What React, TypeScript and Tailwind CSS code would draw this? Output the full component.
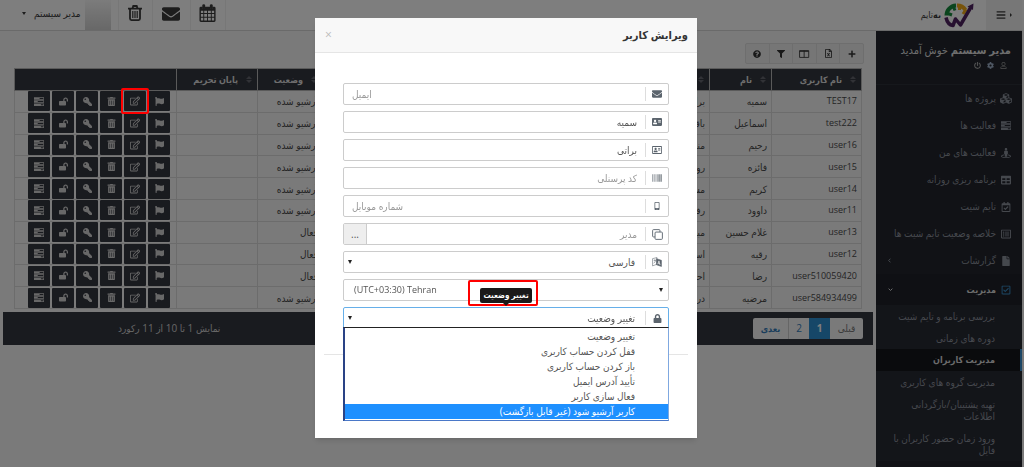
import { Fragment } from "react"
import type { ReactNode } from "react"
import {
  FaBarcode, FaBars, FaCog, FaCubes, FaEnvelope, FaFile, FaFilter, FaFlag, FaAddressCard, FaKey, FaLock,
  FaLockOpen, FaMobileAlt, FaPlus, FaPowerOff, FaQuestionCircle, FaRegAddressCard, FaRegCalendarCheck, FaRegCheckSquare,
  FaRegEdit, FaRegFileExcel, FaRegListAlt, FaRegUser, FaStreetView, FaTable, FaTrashAlt,
} from "react-icons/fa"

const TasksIcon = () => (
  <svg viewBox="0 0 16 14" className="h-[9px] w-[10px]" fill="currentColor" aria-hidden="true">
    <path fillRule="evenodd" d="M0 0h16v4H0zM9 1.2v1.6h6V1.2zM0 5h16v4H0zM6 6.2v1.6h9V6.2zM0 10h16v4H0zM11 11.2v1.6h4v-1.6z" />
  </svg>
)

const CalendarIcon = () => (
  <svg viewBox="0 0 18 19" className="h-[18px]" fill="currentColor" aria-hidden="true">
    <path
      fillRule="evenodd"
      d="M2 3h2v2.2h2.2V3h5.6v2.2H14V3h2a1.5 1.5 0 0 1 1.5 1.5v13A1.5 1.5 0 0 1 16 19H2a1.5 1.5 0 0 1-1.5-1.5v-13A1.5 1.5 0 0 1 2 3zM2 7v2.5h2.5V7zm3.5 0v2.5h3V7zm4 0v2.5h3V7zm4 0v2.5H16V7zM2 10.5v3h2.5v-3zm3.5 0v3h3v-3zm4 0v3h3v-3zm4 0v3H16v-3zM2 14.5v3h2.5v-3zm3.5 0v3h3v-3zm4 0v3h3v-3zm4 0v3H16v-3z"
    />
    <rect x="3.5" y="0.3" width="3" height="5.2" rx="1.4" />
    <rect x="11.5" y="0.3" width="3" height="5.2" rx="1.4" />
  </svg>
)

const TrashIcon = () => (
  <svg viewBox="0 0 14 16" className="h-4" fill="none" stroke="currentColor" aria-hidden="true">
    <path d="M0 3.6h14M4.5 3.4l.8-2.4h3.4l.8 2.4" strokeWidth="1.8" />
    <path d="M2 4v9.6c0 .9.6 1.5 1.4 1.5h7.2c.8 0 1.4-.6 1.4-1.5V4" strokeWidth="1.8" />
    <path d="M4.8 6v7M7 6v7M9.2 6v7" strokeWidth="1.2" />
  </svg>
)

const ColumnsIcon = () => (
  <svg viewBox="0 0 18 14" className="h-[8px]" fill="none" stroke="currentColor" strokeWidth="1.5" aria-hidden="true">
    <path d="M1 1h16v12H1zM9 1v12M1 2.5h16" />
  </svg>
)

const LanguageIcon = () => (
  <svg viewBox="0 0 18 18" className="h-[10px]" fill="none" stroke="currentColor" aria-hidden="true">
    <path d="M1 3l8-2v12l-8 3z" strokeWidth="1" />
    <path d="M3 6h4M5 4.5v2M3 11c2-1 3-3 3-5" strokeWidth="1" />
    <path d="M8 3l9 3v11l-9-3z" fill="currentColor" />
    <path d="M10.5 13l2-6 2 7.5M11.2 11l2.6 1" stroke="#fff" strokeWidth="1.2" />
  </svg>
)

const CopyIcon = () => (
  <svg viewBox="0 0 18 18" className="h-[11px]" fill="none" stroke="currentColor" strokeWidth="1.5" aria-hidden="true">
    <path d="M5 13H2.500A1.500 1.500 0 0 1 1 11.500v-9A1.500 1.500 0 0 1 2.500 1h9A1.500 1.500 0 0 1 13 2.500V5" />
    <rect x="5" y="5" width="12" height="12" rx="1.5" />
  </svg>
)

const Logo = () => (
  <svg viewBox="0 0 60 50" className="h-[25px] w-[30px]" fill="none" aria-hidden="true">
    <path d="M5 25A20 20 0 0 1 24 5" stroke="#148a3c" strokeWidth="8" />
    <path d="M8 21l8 3M19 8l3 7" stroke="#148a3c" strokeWidth="6" />
    <path d="M26 5a20 20 0 0 1 17 9" stroke="#f0a818" strokeWidth="8" />
    <path d="M31 7v7M44 13l-6 9" stroke="#f0a818" strokeWidth="6" />
    <path d="M4 29c2 9 7 15 14 16l5-13 10 12L54 8" stroke="#4f2260" strokeWidth="7" strokeLinejoin="round" />
    <path d="M47 7l12-6-1 13z" fill="#4f2260" />
  </svg>
)

const menu = [
  { label: "پروژه ها", icon: <FaCubes className="text-[13px]" /> },
  { label: "فعالیت ها", icon: <TasksIcon /> },
  { label: "فعالیت های من", icon: <FaStreetView /> },
  { label: "برنامه ریزی روزانه", icon: <FaTable /> },
  { label: "تایم شیت", icon: <FaRegCalendarCheck /> },
  { label: "خلاصه وضعیت تایم شیت ها", icon: <FaRegListAlt /> },
  { label: "گزارشات", icon: <FaFile />, arrow: true },
]

const subMenu = [
  ["بررسی برنامه و تایم شیت"],
  ["دوره های زمانی"],
  ["مدیریت کاربران"],
  ["مدیریت گروه های کاربری"],
  ["تهیه پشتیبان/بازگردانی", "اطلاعات"],
  ["ورود زمان حضور کاربران با", "فایل"],
]

const users = [
  { username: "TEST17", name: "سمیه", family: "براتی", active: false },
  { username: "test222", name: "اسماعیل", family: "باقری", active: false },
  { username: "user16", name: "رحیم", family: "منصوری", active: false },
  { username: "user15", name: "فائزه", family: "روحانی", active: false },
  { username: "user14", name: "کریم", family: "مسعودی", active: false },
  { username: "user11", name: "داوود", family: "رفیعی", active: false },
  { username: "user13", name: "غلام حسین", family: "مبینی", active: true },
  { username: "user12", name: "رقیه", family: "اسدی", active: true },
  { username: "user510059420", name: "رضا", family: "احمدی", active: true },
  { username: "user584934499", name: "مرضیه", family: "درویشی", active: false },
]

const columns = [
  { title: "نام کاربری", width: "w-[90px]" },
  { title: "نام", width: "w-[62px]" },
  { title: "نام خانوادگی", width: "w-[120px]" },
  { title: "ایمیل", width: "" },
  { title: "وضعیت", width: "w-[65px]" },
  { title: "پایان تحریم", width: "w-[81px]" },
]

const actions = [
  { label: "پرچم", icon: <FaFlag /> },
  { label: "ویرایش", icon: <FaRegEdit className="text-[10px]" /> },
  { label: "حذف", icon: <FaTrashAlt /> },
  { label: "رمز عبور", icon: <FaKey className="-scale-x-100" /> },
  { label: "قفل", icon: <FaLockOpen /> },
  { label: "فعالیت ها", icon: <TasksIcon /> },
]

const tools = [
  { label: "افزودن", icon: <FaPlus className="text-[8px]" /> },
  { label: "خروجی اکسل", icon: <FaRegFileExcel /> },
  { label: "ستون ها", icon: <ColumnsIcon /> },
  { label: "فیلتر", icon: <FaFilter className="text-[8px]" /> },
  { label: "راهنما", icon: <FaQuestionCircle className="text-[8px]" /> },
]

const statusOptions = [
  "تغییر وضعیت",
  "قفل کردن حساب کاربری",
  "باز کردن حساب کاربری",
  "تأیید آدرس ایمیل",
  "فعال سازی کاربر",
  "کاربر آرشیو شود (غیر قابل بازگشت)",
]

function Header() {
  return (
    <header className="flex h-[31px] items-stretch border-b border-[#d5d5d5] bg-[#fcfcfc] text-[#3a3a3a]">
      <button aria-label="منو" className="flex w-9 items-center justify-center gap-1 bg-[#efefef] text-[10px]">
        <span className="border-y-2 border-l-2 border-y-transparent border-l-[#3a3a3a]" />
        <FaBars />
      </button>
      <a href="#" className="mr-3 flex items-center gap-[3px] text-[9px]">
        <Logo />
        <span><b>به</b>&zwnj;تایم</span>
      </a>
      <nav className="mr-auto flex">
        <button aria-label="تقویم" className="flex w-9 items-center justify-center border-x border-[#eee] pb-1">
          <CalendarIcon />
        </button>
        <button aria-label="پیام ها" className="flex w-[38px] items-center justify-center border-l border-[#eee] pb-[3px] text-[18px]">
          <FaEnvelope />
        </button>
        <button aria-label="سطل زباله" className="flex w-[34px] items-center justify-center border-l border-[#eee] pb-1">
          <TrashIcon />
        </button>
        <button className="mr-[7px] flex items-center gap-1 pl-[22px] text-[10px]">
          <span className="h-full w-[26px] bg-linear-to-b from-[#f8f8f8] to-[#d0d0d0]" />
          <span className="pb-[3px]">مدیر سیستم</span>
          <span className="mb-1 mr-1 border-x-[2px] border-t-[3px] border-x-transparent border-t-[#3a3a3a]" />
        </button>
      </nav>
    </header>
  )
}

function Sidebar() {
  return (
    <aside className="w-[146px] shrink-0 bg-[#22252d] text-[10px] text-[#8b909b]">
      <div className="h-[54px] border-b border-[#2c3038] pt-[11px] pr-[11px] text-[#dcdcdc]">
        <p className="text-[11px] leading-4"><b>مدیر سیستم</b> خوش آمدید</p>
        <div className="flex gap-1 pt-[3px] pr-[3px] text-[7px] text-[#a0a0a0]">
          <button aria-label="پروفایل" className="p-px"><FaRegUser /></button>
          <button aria-label="تنظیمات" className="p-px text-[#9fb0c8]"><FaCog /></button>
          <button aria-label="خروج" className="p-px"><FaPowerOff /></button>
        </div>
      </div>
      <ul>
        {menu.map((item) => (
          <li key={item.label}>
            <a href="#" className="flex h-[27px] items-center gap-1 pr-[10px] pl-3">
              <span className="flex w-3 justify-center text-[10px]">{item.icon}</span>
              <span className="whitespace-nowrap">{item.label}</span>
              {item.arrow && (
                <svg viewBox="0 0 5 8" className="mr-auto h-[5px]" fill="none" stroke="currentColor" strokeWidth="1.6"><path d="M4 1L1 4l3 3" /></svg>
              )}
            </a>
          </li>
        ))}
        <li>
          <a href="#" className="flex h-[31px] items-center gap-1 bg-[#1e2128] pr-[10px] pl-3 text-[#d8d8d8]">
            <span className="flex w-3 justify-center text-[10px] text-[#3a8fcc]"><FaRegCheckSquare /></span>
            <b className="text-[9px]">مدیریت</b>
            <svg viewBox="0 0 8 5" className="mr-auto w-[5px]" fill="none" stroke="currentColor" strokeWidth="1.6"><path d="M1 1l3 3 3-3" /></svg>
          </a>
          <ul className="bg-[#272a33]">
            {subMenu.map((lines, i) => (
              <li key={lines[0]}>
                <a
                  href="#"
                  className={
                    i === 2
                      ? "block border-r-2 border-[#3a8fcc] bg-[#15171b] py-[5px] pr-[25px] text-[9px] leading-3 font-bold text-[#d8d8d8]"
                      : "block py-[5px] pr-[27px] leading-3 whitespace-nowrap"
                  }
                >
                  {lines.map((line, n) => (
                    <Fragment key={line}>{n > 0 && <br />}{line}</Fragment>
                  ))}
                </a>
              </li>
            ))}
          </ul>
        </li>
      </ul>
    </aside>
  )
}

function UsersTable() {
  return (
    <table className="h-[241px] w-full table-fixed border-collapse text-[10px] text-[#4a4a4a]">
      <thead>
        <tr className="h-[22px] bg-[#33363f] text-[9px] text-[#dcdcdc]">
          {columns.map((col) => (
            <th key={col.title} className={`border border-[#b5b5b5] pr-[5px] text-right font-bold whitespace-nowrap ${col.width}`}>
              <span className="flex items-center gap-2">
                <span className="flex flex-col gap-px">
                  <span className="border-x-[3px] border-b-[3px] border-x-transparent border-b-[#62656d]" />
                  <span className="border-x-[3px] border-t-[3px] border-x-transparent border-t-[#62656d]" />
                </span>
                {col.title}
              </span>
            </th>
          ))}
          <th className="w-[162px] border border-[#b5b5b5]" aria-label="عملیات" />
        </tr>
      </thead>
      <tbody>
        {users.map((user, row) => (
          <tr key={user.username}>
            <td className="border border-[#d8d8d8] pr-1 text-[9px] leading-4">{user.username}</td>
            <td className="border border-[#d8d8d8] pr-1 leading-4 whitespace-nowrap">{user.name}</td>
            <td className="border border-[#d8d8d8] pr-1 leading-4">{user.family}</td>
            <td className="border border-[#d8d8d8]" />
            <td className="border border-[#d8d8d8] pr-1 leading-4 whitespace-nowrap">{user.active ? "فعال" : "آرشیو شده"}</td>
            <td className="border border-[#d8d8d8]" />
            <td className="border border-[#d8d8d8] p-0 pr-[6px]">
              <div className="flex gap-[2px]">
                {actions.map((action, i) => (
                  <button
                    key={action.label}
                    aria-label={action.label}
                    className="relative flex h-5 w-[22px] items-center justify-center rounded-[1px] bg-[#33363f] text-[9px] text-[#d0d0d0]"
                  >
                    {action.icon}
                    {row === 0 && i === 1 && <span className="absolute -inset-[3px] z-50 rounded-xs border-2 border-[#f00]" />}
                  </button>
                ))}
              </div>
            </td>
          </tr>
        ))}
      </tbody>
    </table>
  )
}

function Field({ icon, focused, children }: { icon?: ReactNode; focused?: boolean; children: ReactNode }) {
  return (
    <div className={`relative flex h-[22px] items-center rounded-xs border bg-white ${focused ? "border-[#66afe9]" : "border-[#ccc]"}`}>
      {icon && (
        <span className="flex h-[14px] w-[23px] shrink-0 items-center justify-center border-l border-[#ddd] text-[10px] text-[#5b646d]">
          {icon}
        </span>
      )}
      {children}
    </div>
  )
}

const Caret = ({ side }: { side: string }) => (
  <span className={`pointer-events-none absolute border-x-[2px] border-t-[4px] border-x-transparent border-t-[#222] ${side}`} />
)

const inputClass = "h-full min-w-0 flex-1 px-2 text-[10px] text-[#555] outline-none placeholder:text-[#999] placeholder:opacity-100"
const selectClass = "h-full min-w-0 flex-1 appearance-none px-[10px] text-[#555] outline-none"

function EditUserDialog() {
  return (
    <div role="dialog" aria-labelledby="dialog-title" className="w-[382px] bg-white shadow-md">
      <div className="flex h-[35px] items-center justify-between border-b border-[#e5e5e5] bg-[#f8f8f8] pr-[9px] pl-[10px]">
        <h2 id="dialog-title" className="text-[11px] font-bold text-[#333]">ویرایش کاربر</h2>
        <button aria-label="بستن" className="text-[12px] leading-none text-[#bbb]">×</button>
      </div>
      <form className="flex flex-col gap-[6px] px-7 pt-[30px]">
        <Field icon={<FaEnvelope />}><input aria-label="ایمیل" placeholder="ایمیل" className={`${inputClass} text-left`} /></Field>
        <Field icon={<FaAddressCard />}><input aria-label="نام" defaultValue="سمیه" className={inputClass} /></Field>
        <Field icon={<FaRegAddressCard />}><input aria-label="نام خانوادگی" defaultValue="براتی" className={inputClass} /></Field>
        <Field icon={<FaBarcode />}><input aria-label="کد پرسنلی" placeholder="کد پرسنلی" className={inputClass} /></Field>
        <Field icon={<FaMobileAlt className="text-[8px]" />}>
          <input aria-label="شماره موبایل" placeholder="شماره موبایل" className={`${inputClass} text-left`} />
        </Field>
        <Field icon={<CopyIcon />}>
          <input aria-label="مدیر" placeholder="مدیر" className={inputClass} />
          <button type="button" className="h-full w-[23px] border-r border-[#ccc] bg-[#eee] text-[10px] leading-none text-[#555]">...</button>
        </Field>
        <Field icon={<LanguageIcon />}>
          <select aria-label="زبان" className={`${selectClass} text-[10px]`}><option>فارسی</option></select>
          <Caret side="left-[4px]" />
        </Field>
        <Field>
          <select aria-label="منطقه زمانی" dir="ltr" className={`${selectClass} text-[9px]`}><option>(UTC+03:30) Tehran</option></select>
          <Caret side="right-[5px]" />
        </Field>
        <Field icon={<FaLock className="text-[9px]" />} focused>
          <select aria-label="تغییر وضعیت" className={`${selectClass} text-[10px]`}><option>تغییر وضعیت</option></select>
          <Caret side="left-[4px]" />
          <div className="absolute -top-[28px] left-1/2 flex h-[26px] w-[70px] -translate-x-[38px] items-center justify-center rounded-xs border-2 border-[#f00] pt-1 pl-[6px]">
            <span role="tooltip" className="relative flex h-[15px] w-[52px] items-center justify-center rounded-xs bg-[#1a1a1a] text-[8px] font-bold whitespace-nowrap text-white">
              تغییر وضعیت
              <span className="absolute top-full border-x-[3px] border-t-[3px] border-x-transparent border-t-[#1a1a1a]" />
            </span>
          </div>
          <ul role="listbox" aria-label="تغییر وضعیت" className="absolute -inset-x-px top-[19px] border border-l-2 border-t-[#222] border-r-[#7fa8e0] border-b-[#4a78c8] border-l-[#2a4386] bg-white py-px text-[10px] leading-[15px] text-[#555]">
            {statusOptions.map((option, i) => (
              <li key={option} role="option" aria-selected={i === 5} className={i === 5 ? "bg-[#1e90ff] pr-[33px] text-white" : "pr-[33px]"}>
                {option}
              </li>
            ))}
          </ul>
        </Field>
      </form>
      <div className="mx-[9px] mt-[25px] h-[84px] border-t border-[#e5e5e5]" />
    </div>
  )
}

export default function App() {
  return (
    <div dir="rtl" className="min-h-screen bg-[#f4f4f4] pr-[2px] font-['Open_Sans','DejaVu_Sans_Condensed','DejaVu_Sans',sans-serif]">
      <div className="flex min-h-screen flex-col">
        <Header />
        <div className="flex flex-1">
          <Sidebar />
          <main className="min-w-0 flex-1 pt-3">
            <div className="mr-3 flex h-[21px] w-[119px] rounded-xs border border-[#dcdcdc] bg-[#ececec] text-[9px] text-[#333]">
              {tools.map((tool) => (
                <button key={tool.label} aria-label={tool.label} className="flex flex-1 items-center justify-center border-l border-[#dcdcdc] last:border-l-0">
                  {tool.icon}
                </button>
              ))}
            </div>
            <div className="mx-[14px] mt-1"><UsersTable /></div>
            <div className="mx-[3px] mt-[3px] flex h-[33px] items-center bg-[#33363f] pr-[10px]">
              <nav aria-label="صفحه بندی" className="flex h-[21px] overflow-hidden rounded-xs bg-[#f4f4f4] text-[10px] text-[#337ab7]">
                <button className="w-[33px] text-[#777]">قبلی</button>
                <button className="w-[21px] bg-[#2d8fd0] font-bold text-white">1</button>
                <button className="w-[21px] border-l border-[#ccc]">2</button>
                <button className="w-[35px] text-[9px] font-bold">بعدی</button>
              </nav>
              <p className="mr-auto pl-[115px] text-[10px] text-[#ccc]">نمایش 1 تا 10 از 11 رکورد</p>
            </div>
          </main>
        </div>
      </div>
      <div className="fixed inset-0 z-40 flex items-start justify-center bg-black/50 pt-[18px] pr-3">
        <EditUserDialog />
      </div>
    </div>
  )
}
